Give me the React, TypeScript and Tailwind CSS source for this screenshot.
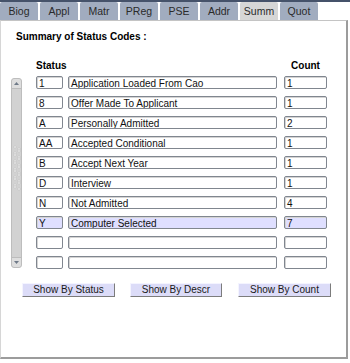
import React from "react";

const rows: [string, string, string][] = [
  ["1", "Application Loaded From Cao", "1"],
  ["8", "Offer Made To Applicant", "1"],
  ["A", "Personally Admitted", "2"],
  ["AA", "Accepted Conditional", "1"],
  ["B", "Accept Next Year", "1"],
  ["D", "Interview", "1"],
  ["N", "Not Admitted", "4"],
  ["Y", "Computer Selected", "7"],
  ["", "", ""],
  ["", "", ""],
];

const tabs = ["Biog", "Appl", "Matr", "PReg", "PSE", "Addr", "Summ", "Quot"];

function Field({ value, width, hl }: { value: string; width: string; hl: boolean }) {
  return (
    <div
      className={`${width} h-[13px] box-border border border-[#80868f] rounded-[2px] pl-[2px] pt-[1px] text-[10px] leading-[11px] text-[#111] whitespace-nowrap overflow-hidden shadow-[inset_1px_1px_0_#d4d4d4] ${
        hl ? "bg-[#dfdfff]" : "bg-white"
      }`}
    >
      {value}
    </div>
  );
}

function Scrollbar() {
  return (
    <div className="w-[11px] h-[190px] mt-[2px] ml-[10px] flex flex-col rounded-[3px] bg-[#d2d2d2] border border-[#bdbdbd] box-border">
      <div className="h-[10px] rounded-t-[3px] bg-[#dedede] border-b border-[#bcbcbc] flex items-center justify-center">
        <svg width="5" height="3" viewBox="0 0 5 3">
          <path d="M0 3 L2.5 0 L5 3 Z" fill="#6f7a88" />
        </svg>
      </div>
      <div className="flex-1 flex flex-col items-center pt-[56px]">
        <svg width="8" height="46" viewBox="0 0 8 46">
          {Array.from({ length: 11 }).map((_, i) => (
            <React.Fragment key={i}>
              <circle cx={i % 2 === 0 ? 2 : 6} cy={i * 4 + 2} r="1.2" fill="#f4f4f4" stroke="#b4b4b4" strokeWidth="0.5" />
              <circle cx={i % 2 === 0 ? 6 : 2} cy={i * 4 + 4} r="1.2" fill="#f4f4f4" stroke="#b4b4b4" strokeWidth="0.5" />
            </React.Fragment>
          ))}
        </svg>
      </div>
      <div className="h-[10px] rounded-b-[3px] bg-[#dedede] border-t border-[#bcbcbc] flex items-center justify-center">
        <svg width="5" height="3" viewBox="0 0 5 3">
          <path d="M0 0 L2.5 3 L5 0 Z" fill="#6f7a88" />
        </svg>
      </div>
    </div>
  );
}

function Btn({ label, width }: { label: string; width: string }) {
  return (
    <div
      className={`${width} h-[14px] box-border bg-[#dcdcf8] border border-t-[#f4f4ff] border-l-[#f4f4ff] border-r-[#7c7c7c] border-b-[#7c7c7c] flex items-center justify-center text-[10px] leading-[12px] text-[#1a1a1a]`}
    >
      {label}
    </div>
  );
}

export default function App() {
  return (
    <div className="w-[350px] h-[363px] bg-white font-['Liberation_Sans',Arial,sans-serif] text-black">
      <div className="h-[20px] flex flex-col">
        <div className="h-[2px] bg-[#45526a]" />
        <div className="flex gap-[2px] flex-1">
          {tabs.map((t) => (
            <div
              key={t}
              className={`w-[38px] flex items-center justify-center text-[10.5px] leading-[12px] text-[#2a2a2a] rounded-t-[2px] ${
                t === "Summ" ? "bg-[#d6d6d6]" : "bg-[#a1acbf]"
              }`}
            >
              {t}
            </div>
          ))}
        </div>
      </div>
      <div className="w-[348px] h-[339px] box-border border-l border-t border-l-[#d6d6d6] border-t-[#c4c4c4] border-r-2 border-b-2 border-r-[#9c9c9c] border-b-[#9c9c9c] flex flex-col">
        <div className="mt-[10px] ml-[15px] text-[10px] font-bold leading-[12px]">Summary of Status Codes :</div>
        <div className="mt-[17px] flex text-[10px] font-bold leading-[12px]">
          <div className="w-[35px]" />
          <div className="w-[27px] whitespace-nowrap">Status</div>
          <div className="w-[5px]" />
          <div className="w-[209px]" />
          <div className="w-[7px]" />
          <div className="w-[43px] text-center">Count</div>
        </div>
        <div className="mt-[4px] flex">
          <Scrollbar />
          <div className="ml-[14px] flex flex-col gap-[7px]">
            {rows.map((r, i) => {
              const hl = r[0] === "Y";
              return (
                <div key={i} className="flex">
                  <Field value={r[0]} width="w-[27px]" hl={hl} />
                  <div className="w-[5px]" />
                  <Field value={r[1]} width="w-[209px]" hl={hl} />
                  <div className="w-[7px]" />
                  <Field value={r[2]} width="w-[43px]" hl={hl} />
                </div>
              );
            })}
          </div>
        </div>
        <div className="mt-[14px] ml-[21px] flex">
          <Btn label="Show By Status" width="w-[93px]" />
          <div className="w-[15px]" />
          <Btn label="Show By Descr" width="w-[92px]" />
          <div className="w-[16px]" />
          <Btn label="Show By Count" width="w-[93px]" />
        </div>
      </div>
    </div>
  );
}
